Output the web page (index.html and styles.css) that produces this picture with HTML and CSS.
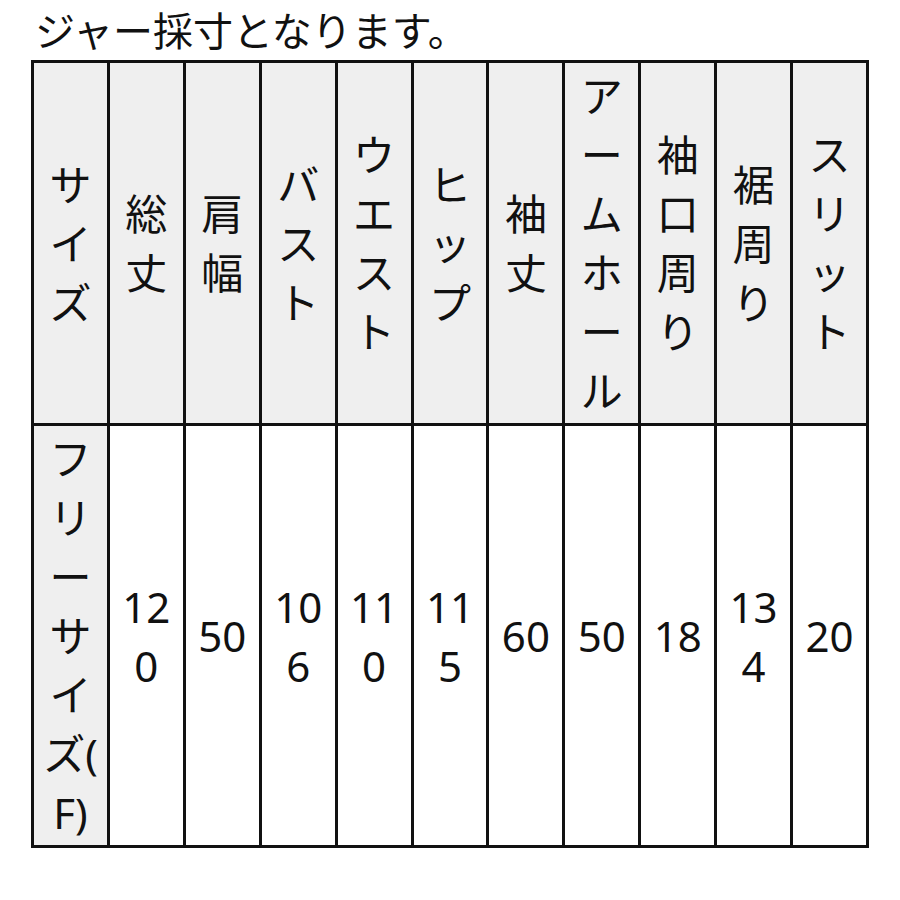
FILE: index.html
```html
<!DOCTYPE html>
<html lang="ja">
<head>
<meta charset="utf-8">
<title>サイズ表</title>
<link rel="stylesheet" href="styles.css">
</head>
<body>
<div class="page">
  <p class="title">ジャー採寸となります。</p>
  <table class="size-table">
    <tr class="head">
      <th>サイズ</th>
      <th>総丈</th>
      <th>肩幅</th>
      <th>バスト</th>
      <th>ウエスト</th>
      <th>ヒップ</th>
      <th>袖丈</th>
      <th>アームホール</th>
      <th>袖口周り</th>
      <th>裾周り</th>
      <th>スリット</th>
    </tr>
    <tr class="data">
      <th>フリーサイズ(F)</th>
      <td>120</td>
      <td>50</td>
      <td>106</td>
      <td>110</td>
      <td>115</td>
      <td>60</td>
      <td>50</td>
      <td>18</td>
      <td>134</td>
      <td>20</td>
    </tr>
  </table>
</div>
</body>
</html>
```

FILE: styles.css
```css
html, body {
  margin: 0;
  padding: 0;
  background: #ffffff;
}

body {
  font-family: "Noto Sans", "Noto Sans CJK JP", sans-serif;
  color: #111111;
}

.page {
  padding: 0 31px;
}

.title {
  margin: 0;
  padding: 2px 0 0 4px;
  font-size: 40px;
  line-height: 58px;
  height: 58px;
  overflow: hidden;
  white-space: nowrap;
}

.size-table {
  border-collapse: collapse;
  table-layout: fixed;
  width: 838px;
  font-size: 42px;
  line-height: 59px;
}

.size-table th,
.size-table td {
  border: 3px solid #111111;
  padding: 3px 6px;
  text-align: center;
  vertical-align: middle;
  font-weight: normal;
  word-break: break-all;
  line-break: anywhere;
  overflow-wrap: anywhere;
}

.size-table .head th {
  background: #efefef;
}

.size-table .data th {
  background: #efefef;
}

.size-table .data td {
  background: #ffffff;
}
```
